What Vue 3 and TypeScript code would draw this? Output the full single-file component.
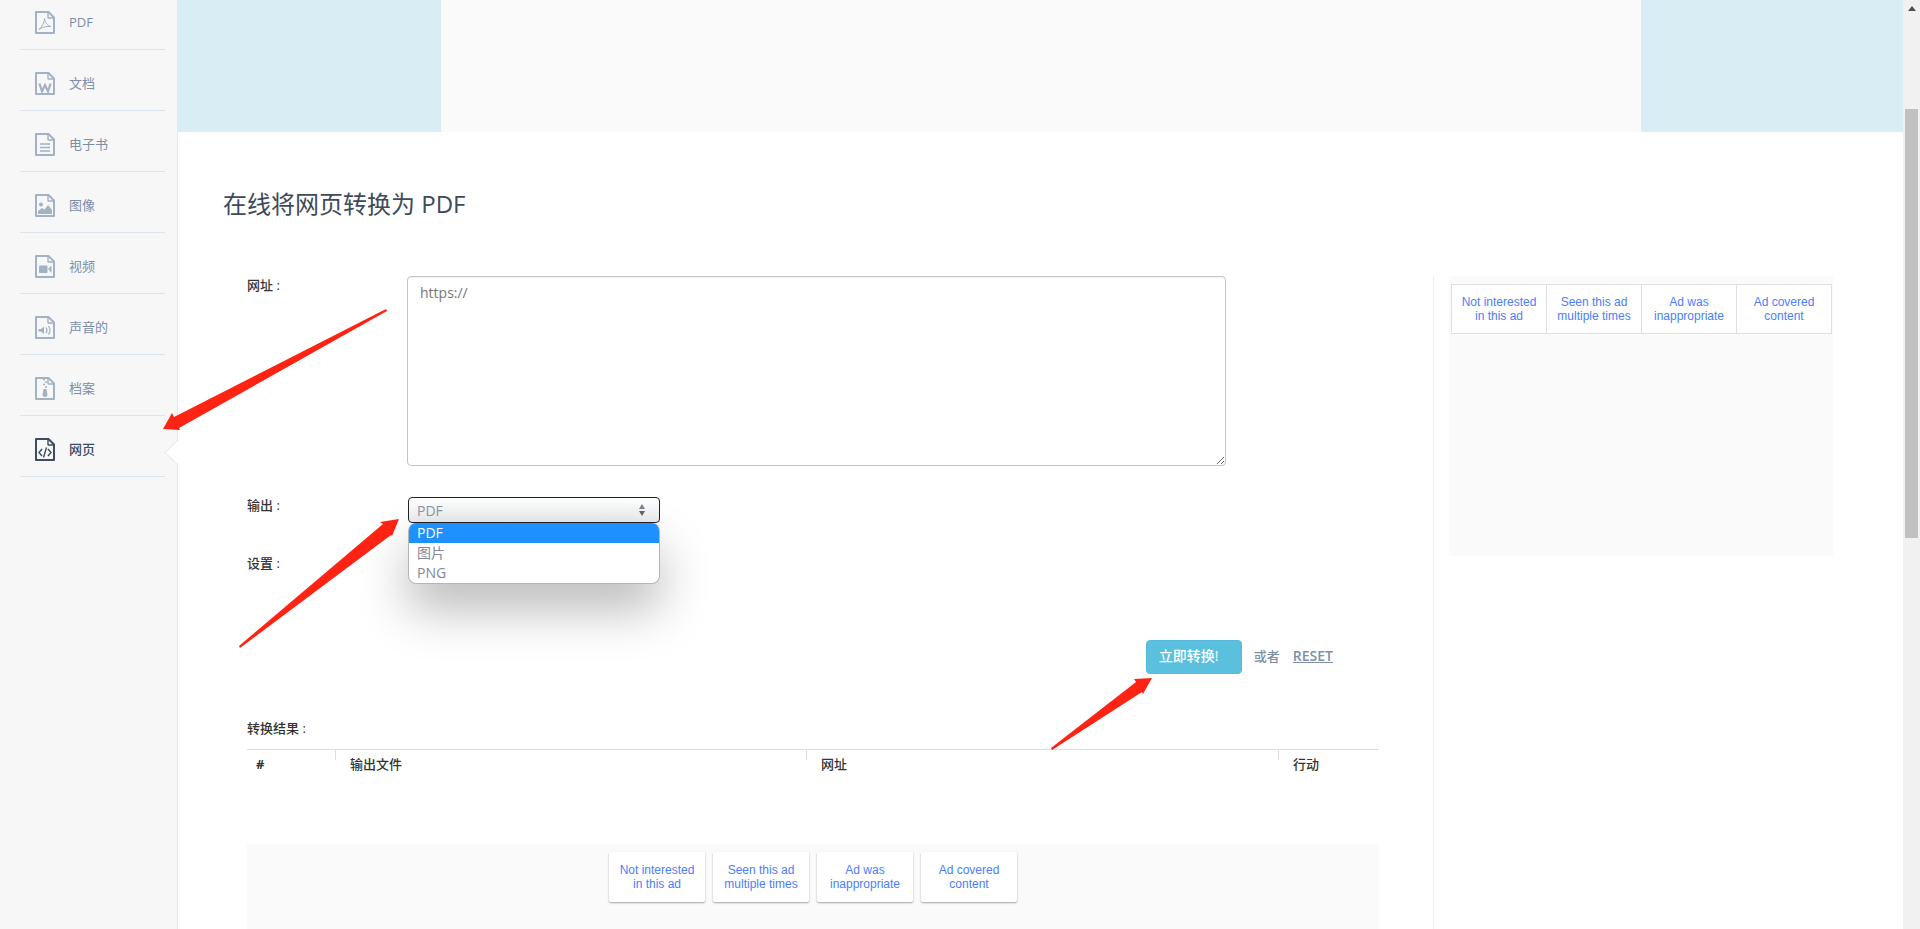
<script setup lang="ts">
  interface NavItem {
    id: string;
    label: string;
    active?: boolean;
  }

  const navItems: NavItem[] = [
    {id: 'pdf', label: 'PDF'},
    {id: 'doc', label: '文档'},
    {id: 'book', label: '电子书'},
    {id: 'image', label: '图像'},
    {id: 'video', label: '视频'},
    {id: 'audio', label: '声音的'},
    {id: 'zip', label: '档案'},
    {id: 'web', label: '网页', active: true}
  ];

  const adOptions = [
    ['Not interested', 'in this ad'],
    ['Seen this ad', 'multiple times'],
    ['Ad was', 'inappropriate'],
    ['Ad covered', 'content']
  ];

  const outputOptions = ['PDF', '图片', 'PNG'];
  const columns = ['#', '输出文件', '网址', '行动'];
</script>

<template>
  <div class="page">
    <aside class="sidebar">
      <ul class="nav">
        <li v-for="item in navItems" :key="item.id" class="nav-item" :class="{ active: item.active }">
          <svg class="nav-icon" viewBox="0 0 20 23" width="20" height="23" fill="none" stroke="currentColor">
            <path d="M1 1H13.5L19 6.5V22H1Z" stroke-width="2" stroke-linejoin="round" />
            <path d="M13 1V6.5Q13 7 13.5 7H19" stroke-width="1.4" />
            <path v-if="item.id === 'pdf'" d="M4 18.5C7 16 9.5 11 9.5 7.5C10 12 13 15 16 15.5C12 15 7.5 16 4 18.5Z" stroke-width="1" />
            <path v-else-if="item.id === 'doc'" d="M4.5 11.5L7 19.5L10 13L13 19.5L15.5 11.5" stroke-width="2.2" />
            <path v-else-if="item.id === 'book'" d="M5 11H15M5 14.5H15M5 18H15" stroke-width="1.5" />
            <template v-else-if="item.id === 'image'">
              <circle cx="6" cy="10.5" r="2" fill="currentColor" stroke="none" />
              <path d="M3 20V17L7 14L9.5 15.5L13 11L17 16V20Z" fill="currentColor" stroke="none" />
            </template>
            <template v-else-if="item.id === 'video'">
              <rect x="4" y="10.5" width="8.5" height="7.5" rx="1" fill="currentColor" stroke="none" />
              <path d="M13 14L16.5 10.5V18Z" fill="currentColor" stroke="none" />
            </template>
            <template v-else-if="item.id === 'audio'">
              <path d="M3.5 13H6L9 10.5V18L6 15.5H3.5Z" fill="currentColor" stroke="none" />
              <path d="M11 11.5Q13 14.2 11 17M13.5 10Q16.5 14.2 13.5 18.5" stroke-width="1.2" />
            </template>
            <template v-else-if="item.id === 'zip'">
              <path d="M8 2.5H10M10 5H12M8 7.5H10M10 10H12" stroke-width="1.4" />
              <path d="M8.5 12H11.5L12.5 18Q12.5 20 10 20Q7.5 20 7.5 18Z" fill="currentColor" stroke="none" />
            </template>
            <path v-else-if="item.id === 'web'" d="M7 11L4 14.5L7 18M13 11L16 14.5L13 18M11.5 9.5L8.5 19.5" stroke-width="1.4" />
          </svg>
          <span class="nav-label">{{ item.label }}</span>
          <span v-if="item.active" class="nav-notch"></span>
        </li>
      </ul>
    </aside>

    <main class="main">
      <div class="banner">
        <div class="banner-side"></div>
        <div class="banner-mid"></div>
        <div class="banner-side"></div>
      </div>

      <div class="content">
        <section class="left">
          <h1 class="title">在线将网页转换为 PDF</h1>

          <form class="form" @submit.prevent>
            <div class="row url-row">
              <label class="label">网址 :</label>
              <textarea class="url-input" value="https://"></textarea>
            </div>

            <div class="row output-row">
              <label class="label">输出 :</label>
              <div class="select">
                <span>PDF</span>
                <span class="select-arrows"><i class="up"></i><i class="down"></i></span>
                <ul class="options">
                  <li v-for="(opt, i) in outputOptions" :key="opt" :class="{ selected: i === 0 }">{{ opt }}</li>
                </ul>
              </div>
            </div>

            <div class="row settings-row">
              <label class="label">设置 :</label>
              <div class="settings-box"></div>
            </div>

            <div class="actions">
              <button class="convert" type="button">立即转换!</button>
              <span class="or">或者</span>
              <a class="reset" href="#">RESET</a>
            </div>

            <div class="result-title">转换结果 :</div>
            <div class="result-head">
              <div v-for="col in columns" :key="col" class="result-col">{{ col }}</div>
            </div>

            <div class="bottom-ad">
              <button v-for="(lines, i) in adOptions" :key="i" class="ad-card">
                {{ lines[0] }}<br />{{ lines[1] }}
              </button>
            </div>
          </form>
        </section>

        <section class="right">
          <div class="side-ad">
            <div class="ad-table">
              <div v-for="(lines, i) in adOptions" :key="i" class="ad-cell">
                {{ lines[0] }}<br />{{ lines[1] }}
              </div>
            </div>
          </div>
        </section>
      </div>
    </main>

    <div class="scrollbar">
      <span class="scroll-up"></span>
      <span class="scroll-thumb"></span>
    </div>

    <!-- red annotation arrows drawn over the screenshot -->
    <svg class="arrows" width="1920" height="929" viewBox="0 0 1920 929">
      <polygon points="386,309 387,311 179,428 180,430 163,429 172,413 174,417" fill="#ff2313" />
      <polygon points="239,646 240,648 391,535 392,536 399,519 380,522 383,524" fill="#ff2313" />
      <polygon points="1051,748 1052,750 1142,692 1143,694 1152,678 1134,679 1136,682" fill="#ff2313" />
    </svg>
  </div>
</template>

<style scoped>
  .page {
    position: relative;
    display: flex;
    height: 929px;
    overflow: hidden;
    background: #fff;
    font-family: "Open Sans", "Noto Sans CJK SC", sans-serif;
    font-size: 13px;
    color: #333;
  }

  .sidebar {
    width: 177px;
    flex: none;
    background: #f7f7f7;
    border-right: 1px solid #e3e8ee;
  }

  .nav {
    list-style: none;
    margin: 0 0 0 20px;
    padding: 0;
    width: 145px;
  }

  .nav-item {
    position: relative;
    display: flex;
    align-items: flex-start;
    height: 61px;
    box-sizing: border-box;
    padding: 22px 0 0 15px;
    border-bottom: 1px solid #dde3ea;
    color: #a3b1c4;
  }

  .nav-item:first-child {
    height: 50px;
    padding-top: 11px;
  }

  .nav-item.active {
    color: #3b4c63;
  }

  .nav-icon {
    flex: none;
  }

  .nav-label {
    margin-left: 14px;
    margin-top: 2px;
    line-height: 18px;
    color: #7d8ea8;
  }

  .active .nav-label {
    color: #3b4c63;
    font-weight: 500;
  }

  .nav-notch {
    position: absolute;
    top: 28px;
    right: -20px;
    width: 16px;
    height: 16px;
    background: #fff;
    border-left: 1px solid #e3e8ee;
    border-bottom: 1px solid #e3e8ee;
    transform: rotate(45deg);
  }

  .main {
    flex: 1;
    min-width: 0;
  }

  .banner {
    display: flex;
    height: 132px;
  }

  .banner-side {
    flex: 1;
    background: #d9edf5;
  }

  .banner-mid {
    width: 1200px;
    background: #fafafa;
  }

  .content {
    display: flex;
  }

  .left {
    width: 1255px;
    flex: none;
    box-sizing: border-box;
    padding: 55px 54px 0 45px;
  }

  .title {
    margin: 0;
    font-size: 24px;
    line-height: 34px;
    font-weight: 400;
    color: #3d4a5c;
  }

  .form {
    margin: 55px 0 0 24px;
  }

  .row {
    display: flex;
    align-items: flex-start;
  }

  .label {
    width: 160px;
    flex: none;
    font-weight: 500;
    line-height: 18px;
    color: #333;
  }

  .url-input {
    display: block;
    width: 819px;
    height: 190px;
    box-sizing: border-box;
    padding: 7px 12px;
    border: 1px solid #c4c4c4;
    border-radius: 4px;
    box-shadow: inset 0 1px 1px rgba(0, 0, 0, 0.05);
    font: 14px/18px "Open Sans", "Noto Sans CJK SC", sans-serif;
    color: #777;
    outline: none;
  }

  .output-row {
    margin-top: 31px;
  }

  .output-row .label {
    margin-top: -1px;
  }

  .select {
    position: relative;
    display: flex;
    align-items: center;
    justify-content: space-between;
    width: 252px;
    height: 26px;
    box-sizing: border-box;
    margin-left: 1px;
    padding: 0 14px 0 8px;
    border: 1px solid #222;
    border-radius: 4px;
    background: linear-gradient(#fff, #e9ebee);
    color: #8a96a3;
    font-size: 14px;
    z-index: 2;
  }

  .select-arrows {
    display: flex;
    flex-direction: column;
    gap: 2px;
  }

  .select-arrows i {
    width: 0;
    height: 0;
    border-left: 3.5px solid transparent;
    border-right: 3.5px solid transparent;
  }

  .select-arrows .up {
    border-bottom: 5px solid #7b8490;
  }

  .select-arrows .down {
    border-top: 5px solid #5c6570;
  }

  .options {
    position: absolute;
    top: 25px;
    left: -1px;
    width: 250px;
    margin: 0;
    padding: 0;
    list-style: none;
    overflow: hidden;
    background: #fff;
    border: 1px solid #b5b5b5;
    border-top: 0;
    border-radius: 8px;
    box-shadow: 0 25px 50px rgba(0, 0, 0, 0.28);
  }

  .options li {
    height: 20px;
    line-height: 20px;
    padding-left: 8px;
    color: #7e8a97;
    font-size: 14px;
  }

  .options .selected {
    background: #1e90ff;
    color: #fff;
  }

  .settings-row {
    margin-top: 31px;
  }

  .settings-box {
    width: 252px;
    height: 26px;
    margin-left: 1px;
    border: 1px solid #ccc;
    border-radius: 4px;
    box-sizing: border-box;
  }

  .actions {
    display: flex;
    align-items: center;
    justify-content: flex-end;
    margin-top: 60px;
    padding-right: 46px;
  }

  .convert {
    width: 96px;
    height: 34px;
    padding: 0 0 5px 12px;
    border: 1px solid #56bbdb;
    border-radius: 4px;
    background: #5bc0de;
    color: #fff;
    text-align: left;
    font: 500 14px "Open Sans", "Noto Sans CJK SC", sans-serif;
  }

  .or {
    margin-left: 12px;
    margin-top: -4px;
    color: #7d8ea8;
    font-weight: 500;
  }

  .reset {
    margin-left: 13px;
    margin-top: -4px;
    color: #7d8ea8;
    font-size: 14px;
    font-weight: 600;
    text-decoration: underline;
  }

  .result-title {
    margin-top: 45px;
    line-height: 18px;
    font-weight: 500;
    color: #333;
  }

  .result-head {
    display: grid;
    grid-template-columns: 88px 471px 472px 101px;
    width: 1132px;
    height: 95px;
    margin-top: 12px;
    border-top: 1px solid #ddd;
    box-sizing: border-box;
    font-weight: 500;
    color: #333;
  }

  .result-col {
    position: relative;
    padding: 5px 0 0 15px;
    line-height: 18px;
  }

  .result-col:first-child {
    padding-left: 9px;
    font-weight: 700;
  }

  .result-col + .result-col::before {
    content: "";
    position: absolute;
    top: 0;
    left: 0;
    width: 1px;
    height: 10px;
    background: #ddd;
  }

  .bottom-ad {
    display: flex;
    justify-content: center;
    gap: 8px;
    width: 1132px;
    height: 85px;
    box-sizing: border-box;
    padding-top: 8px;
    background: #fafafa;
  }

  .ad-card {
    width: 96px;
    height: 50px;
    padding: 0;
    border: 0;
    border-radius: 2px;
    background: #fff;
    box-shadow: 0 1px 2px rgba(0, 0, 0, 0.35);
    font: 12px/14px "Liberation Sans", Arial, sans-serif;
    color: #4c7dfb;
  }

  .right {
    flex: 1;
    margin-top: 144px;
    height: 800px;
    border-left: 1px solid #eee;
    padding-left: 15px;
  }

  .side-ad {
    width: 384px;
    height: 280px;
    box-sizing: border-box;
    padding: 8px 1px 0 2px;
    background: #fafafa;
  }

  .ad-table {
    display: flex;
    width: 381px;
    height: 50px;
    box-sizing: border-box;
    border: 1px solid #e0e0e0;
    background: #fff;
  }

  .ad-cell {
    flex: 1;
    padding-top: 10px;
    text-align: center;
    font: 12px/14px "Liberation Sans", Arial, sans-serif;
    color: #4c7dfb;
  }

  .ad-cell + .ad-cell {
    border-left: 1px solid #e0e0e0;
  }

  .scrollbar {
    width: 17px;
    flex: none;
    background: #f1f1f1;
    display: flex;
    flex-direction: column;
    align-items: center;
  }

  .scroll-up {
    width: 0;
    height: 0;
    margin-top: 6px;
    border-left: 4px solid transparent;
    border-right: 4px solid transparent;
    border-bottom: 5px solid #505050;
  }

  .scroll-thumb {
    width: 13px;
    height: 429px;
    margin-top: 98px;
    background: #c1c1c1;
  }

  .arrows {
    position: absolute;
    top: 0;
    left: 0;
    pointer-events: none;
    z-index: 5;
  }
</style>

<style>
  body {
    margin: 0;
    overflow: hidden;
  }
</style>
